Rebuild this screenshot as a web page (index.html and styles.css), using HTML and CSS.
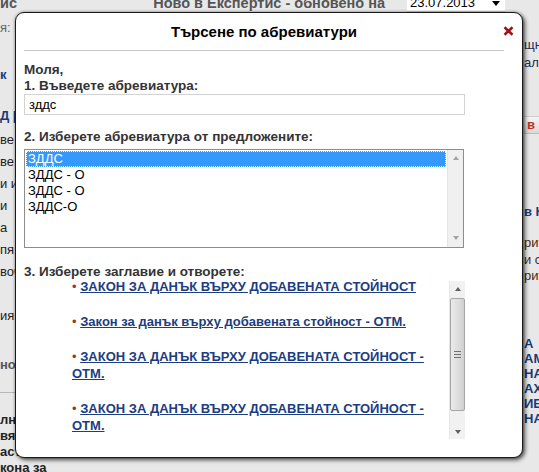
FILE: index.html
```html
<!DOCTYPE html>
<html>
<head>
<meta charset="utf-8">
<link rel="stylesheet" href="styles.css">
</head>
<body>
<div class="page">
  <div class="topbar">
    <span class="top-left">ис</span>
    <span class="top-title">Ново в Експертис - обновено на</span>
    <span class="date-select">23.07.2013<span class="date-arrow"></span></span>
  </div>
  <div class="bg-main">
    <div class="bg-left">
      <div class="bl-a">я:</div>
      <div class="bl-b">к</div>
      <div class="bl-c">Д |</div>
      <div class="bl-list">
        <div>ве</div>
        <div>ве -</div>
        <div>и и</div>
        <div>и</div>
        <div>а</div>
        <div>пя</div>
        <div>воч</div>
        <div>&nbsp;</div>
        <div>ия</div>
      </div>
      <div class="bl-d">но</div>
      <div class="bl-rule"></div>
      <div class="bl-list2">
        <div>лн</div>
        <div>вя</div>
        <div>аст</div>
        <div>кона за</div>
      </div>
    </div>
    <div class="bg-center"></div>
    <div class="bg-right">
      <div class="br-a">щн<br>ал</div>
      <div class="br-box">в</div>
      <div class="br-b">в Н</div>
      <div class="br-c">рит<br>и с<br>рит</div>
      <div class="br-d">А<br>АМ<br>НА<br>АХ<br>ИЕ<br>НА</div>
    </div>
  </div>

  <div class="dialog">
    <div class="dlg-head">
      <span class="dlg-title">Търсене по абревиатури</span>
      <span class="dlg-close"><svg width="11" height="10" viewBox="0 0 11 10"><path d="M1.5 1.2 L9.5 8.8 M9.5 1.2 L1.5 8.8" stroke="#a11212" stroke-width="2.6" stroke-linecap="butt"/></svg></span>
    </div>
    <div class="dlg-body">
      <div class="lbl">Моля,</div>
      <div class="lbl">1. Въведете абревиатура:</div>
      <div class="input">зддс</div>
      <div class="lbl lbl-2">2. Изберете абревиатура от предложените:</div>
      <div class="listbox">
        <div class="options">
          <div class="opt sel">ЗДДС</div>
          <div class="opt">ЗДДС - О</div>
          <div class="opt">ЗДДС - О</div>
          <div class="opt">ЗДДС-О</div>
        </div>
        <div class="sbar">
          <span class="arr-up"></span>
          <span class="arr-down"></span>
        </div>
      </div>
      <div class="lbl lbl-3">3. Изберете заглавие и отворете:</div>
      <div class="results">
        <ul class="links">
          <li><span class="bullet">•</span> <a href="#">ЗАКОН ЗА ДАНЪК ВЪРХУ ДОБАВЕНАТА СТОЙНОСТ</a></li>
          <li><span class="bullet">•</span> <a href="#">Закон за данък върху добавената стойност - ОТМ.</a></li>
          <li><span class="bullet">•</span> <a href="#">ЗАКОН ЗА ДАНЪК ВЪРХУ ДОБАВЕНАТА СТОЙНОСТ - ОТМ.</a></li>
          <li><span class="bullet">•</span> <a href="#">ЗАКОН ЗА ДАНЪК ВЪРХУ ДОБАВЕНАТА СТОЙНОСТ - ОТМ.</a></li>
        </ul>
        <div class="sbar2">
          <span class="arr2-up"></span>
          <div class="thumb"><span class="grip"></span></div>
          <span class="arr2-down"></span>
        </div>
      </div>
    </div>
  </div>
</div>
</body>
</html>
```

FILE: styles.css
```css
* { box-sizing: border-box; }
html, body { margin: 0; padding: 0; }
body {
  background: #e7e7e7;
  font-family: "Liberation Sans", Arial, sans-serif;
  font-size: 13px;
  color: #000;
}
.page {
  position: relative;
  width: 539px;
  height: 472px;
  overflow: hidden;
  background: #e8e8e8;
}

/* ---------- background page ---------- */
.topbar {
  display: flex;
  align-items: flex-start;
  height: 13px;
  overflow: hidden;
  font-weight: bold;
  color: #555;
  line-height: 14px;
}
.top-left { margin-top: -4px; font-size: 14.5px; }
.top-title { margin-left: auto; margin-top: -5px; font-size: 14.5px; line-height: 16px; }
.date-select {
  position: relative;
  margin-left: 22px;
  margin-right: 34px;
  margin-top: -4px;
  width: 98px;
  height: 16px;
  background: #fff;
  font-weight: normal;
  color: #000;
  padding-left: 3px;
  line-height: 14px;
  border-bottom: 1px solid #ccc;
}
.date-arrow {
  position: absolute;
  right: 5px;
  top: 5px;
  width: 0;
  height: 0;
  border-left: 4px solid transparent;
  border-right: 4px solid transparent;
  border-top: 5px solid #000;
}
.bg-main {
  display: grid;
  grid-template-columns: 90px 1fr 19px;
  height: 459px;
}
.bg-left {
  white-space: nowrap;
  overflow: hidden;
  line-height: 16px;
  color: #222;
}
.bl-a { margin-top: 7px; color: #666; }
.bl-b { margin-top: 31px; color: #1b3a78; font-weight: bold; }
.bl-c { margin-top: 25px; color: #1b3a78; font-weight: bold; }
.bl-list { margin-top: 5px; line-height: 22px; }
.bl-d { margin-top: 30px; font-weight: bold; color: #555; }
.bl-rule { margin-top: 19px; height: 1px; background: #b8b8b8; }
.bl-list2 { margin-top: 19px; font-weight: bold; line-height: 16px; }
.bg-right {
  white-space: nowrap;
  overflow: hidden;
  line-height: 18px;
  padding-left: 4px;
  color: #1a2a50;
}
.br-a { margin-top: 23px; }
.br-box {
  margin-top: 44px;
  height: 18px;
  background: linear-gradient(#f4f4f4, #d8d8d8);
  border-top: 1px solid #ccc;
  border-bottom: 1px solid #bbb;
  color: #c0301a;
  font-weight: bold;
  line-height: 16px;
  padding-left: 3px;
}
.br-b { margin-top: 69px; color: #1b3a78; font-weight: bold; }
.br-c { margin-top: 14px; line-height: 16.5px; color: #4a2a10; }
.br-d { margin-top: 51px; line-height: 15px; font-weight: bold; color: #1b3a78; }

/* ---------- dialog ---------- */
.dialog {
  position: absolute;
  left: 15px;
  top: 12px;
  width: 508px;
  height: 446px;
  background: #fff;
  border: 1px solid #1a1a1a;
  border-radius: 9px;
  box-shadow: 2px 2px 4px rgba(0,0,0,0.65), 0 0 3px rgba(0,0,0,0.35);
  padding: 0 18px 0 8px;
}
.dlg-head {
  height: 38px;
  display: flex;
  align-items: center;
  justify-content: center;
  border-bottom: 1px solid #c8c8c8;
}
.dlg-title {
  font-size: 15px;
  font-weight: bold;
  color: #000;
  padding-bottom: 1px;
}
.dlg-close {
  position: absolute;
  right: 8px;
  top: 13px;
  width: 11px;
  height: 10px;
  display: block;
}
.dlg-close svg { display: block; }
.dlg-body { padding-top: 11px; }
.lbl {
  font-size: 13.5px;
  font-weight: bold;
  color: #333;
  line-height: 16px;
}
.input {
  width: 441px;
  height: 21px;
  border: 1px solid #d3d3d3;
  padding-left: 4px;
  line-height: 19px;
  color: #000;
}
.lbl-2 { margin-top: 14px; }
.listbox {
  margin-top: 4px;
  width: 440px;
  height: 99px;
  border: 1px solid #8d8d8d;
  display: flex;
}
.options {
  flex: 1;
  padding: 1px 1px 0 1px;
}
.opt {
  height: 16px;
  line-height: 16px;
  padding-left: 2px;
  color: #000;
}
.opt.sel {
  background: #3399ff;
  color: #fff;
  outline: 1px dotted #fff;
  outline-offset: -1px;
}
.sbar {
  width: 16px;
  background: #f0f0f0;
  border-left: 1px solid #e4e4e4;
  display: flex;
  flex-direction: column;
  justify-content: space-between;
  align-items: center;
  padding: 6px 0 7px;
}
.arr-up, .arr2-up {
  width: 0; height: 0;
  border-left: 3.5px solid transparent;
  border-right: 3.5px solid transparent;
  border-bottom: 4px solid #a3a3a3;
}
.arr-down, .arr2-down {
  width: 0; height: 0;
  border-left: 3.5px solid transparent;
  border-right: 3.5px solid transparent;
  border-top: 4px solid #a3a3a3;
}
.lbl-3 { margin-top: 16px; }
.results {
  display: flex;
  width: 441px;
  height: 161px;
  margin-top: -2px;
}
.links {
  flex: 1;
  margin: 0;
  padding: 0 0 0 48px;
  list-style: none;
  overflow: hidden;
}
.links li {
  line-height: 17px;
  margin-bottom: 18px;
  font-weight: bold;
}
.bullet {
  color: #9a3a14;
  font-weight: normal;
}
.links a {
  color: #1c3d80;
  text-decoration: underline;
}
.sbar2 {
  width: 16px;
  margin-top: 3px;
  background: #f1f1f1;
  border-left: 1px solid #e6e6e6;
  display: flex;
  flex-direction: column;
  align-items: center;
  padding-top: 6px;
}
.arr2-up { border-bottom-color: #606060; }
.arr2-down { border-top-color: #606060; margin-top: 19px; }
.thumb {
  margin-top: 7px;
  width: 15px;
  height: 113px;
  border: 1px solid #a6a6a6;
  border-radius: 2px;
  background: linear-gradient(to right, #e9e9e9, #dcdcdc 60%, #cfcfcf);
  display: flex;
  align-items: center;
  justify-content: center;
}
.grip {
  width: 7px;
  height: 7px;
  background: repeating-linear-gradient(#707070 0 1px, transparent 1px 3px);
}
```
